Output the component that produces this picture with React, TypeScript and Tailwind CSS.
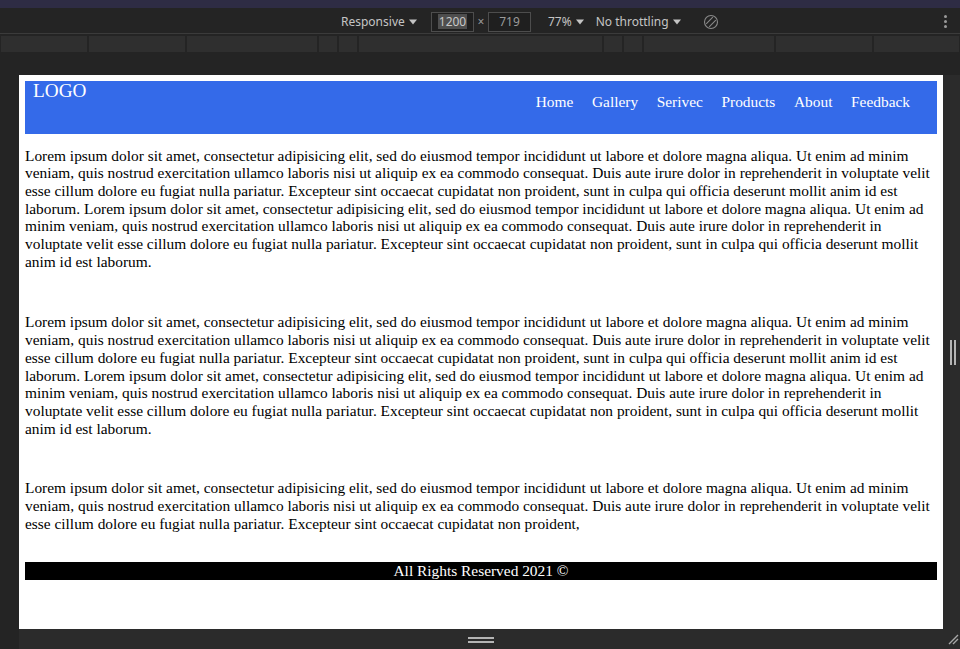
import React from "react";

const LOREM_FULL =
  "Lorem ipsum dolor sit amet, consectetur adipisicing elit, sed do eiusmod tempor incididunt ut labore et dolore magna aliqua. Ut enim ad minim veniam, quis nostrud exercitation ullamco laboris nisi ut aliquip ex ea commodo consequat. Duis aute irure dolor in reprehenderit in voluptate velit esse cillum dolore eu fugiat nulla pariatur. Excepteur sint occaecat cupidatat non proident, sunt in culpa qui officia deserunt mollit anim id est laborum. Lorem ipsum dolor sit amet, consectetur adipisicing elit, sed do eiusmod tempor incididunt ut labore et dolore magna aliqua. Ut enim ad minim veniam, quis nostrud exercitation ullamco laboris nisi ut aliquip ex ea commodo consequat. Duis aute irure dolor in reprehenderit in voluptate velit esse cillum dolore eu fugiat nulla pariatur. Excepteur sint occaecat cupidatat non proident, sunt in culpa qui officia deserunt mollit anim id est laborum.";

const LOREM_SHORT =
  "Lorem ipsum dolor sit amet, consectetur adipisicing elit, sed do eiusmod tempor incididunt ut labore et dolore magna aliqua. Ut enim ad minim veniam, quis nostrud exercitation ullamco laboris nisi ut aliquip ex ea commodo consequat. Duis aute irure dolor in reprehenderit in voluptate velit esse cillum dolore eu fugiat nulla pariatur. Excepteur sint occaecat cupidatat non proident,";

function Caret() {
  return (
    <svg width="8" height="6" viewBox="0 0 8 6" className="ml-[4px] shrink-0">
      <path d="M0 0.5 L8 0.5 L4 5.5 Z" fill="#c4c4c4" />
    </svg>
  );
}

const segments = [86, 96, 130, 18, 18, 243, 18, 18, 130, 96, 85];

export default function App() {
  return (
    <div className="w-[960px] h-[649px] bg-[#242424] flex flex-col overflow-hidden font-['Noto_Sans',sans-serif]">
      {/* window title strip */}
      <div className="h-[8px] bg-[#2e2c44]" />

      {/* device toolbar */}
      <div className="h-[25px] flex items-center pt-[2px] pl-[341px] pr-[13px] text-[12px] text-[#c4c4c4]">
        <div className="w-[74px] shrink-0 flex items-center">
          <span>Responsive</span>
          <Caret />
        </div>
        <div className="ml-[16px] w-[43px] h-[20px] border border-[#4d4d4d] bg-[#1f1f1f] flex items-center justify-center">
          <span className="bg-[#4e4e4e] text-[#c8c8c8] px-[1px] leading-[15px]">1200</span>
        </div>
        <div className="w-[14px] text-center text-[#9a9a9a]">×</div>
        <div className="w-[43px] h-[20px] border border-[#4d4d4d] bg-[#1f1f1f] flex items-center justify-center text-[#9a9a9a]">
          719
        </div>
        <div className="ml-[17px] flex items-center">
          <span>77%</span>
          <Caret />
        </div>
        <div className="ml-[12px] flex items-center">
          <span>No throttling</span>
          <Caret />
        </div>
        <svg width="16" height="16" viewBox="0 0 16 16" className="ml-[22px]">
          <circle cx="8" cy="8" r="6.5" fill="none" stroke="#8a8a8a" strokeWidth="1.1" />
          <path d="M3.2 9.8 L9.8 3.2 M6.2 12.8 L12.8 6.2" stroke="#8a8a8a" strokeWidth="1.1" fill="none" />
        </svg>
        <div className="flex-1" />
        <div className="flex flex-col gap-[2px]">
          <div className="w-[3px] h-[3px] rounded-full bg-[#9a9a9a]" />
          <div className="w-[3px] h-[3px] rounded-full bg-[#9a9a9a]" />
          <div className="w-[3px] h-[3px] rounded-full bg-[#9a9a9a]" />
        </div>
      </div>
      <div className="h-[1px] bg-[#3b3b3b]" />

      {/* media query bar */}
      <div className="mt-[2px] h-[16px] flex gap-[2px] pl-[1px]">
        {segments.map((w, i) => (
          <div key={i} className="h-full bg-[#2f2f2f] shrink-0" style={{ width: w }} />
        ))}
      </div>

      <div className="h-[23px]" />

      {/* viewport */}
      <div className="flex h-[554px]">
        <div className="w-[19px] shrink-0" />
        <div className="w-[924px] shrink-0 bg-white p-[6px] font-['Liberation_Serif',serif] overflow-hidden">
          <header className="h-[53px] bg-[#346ae9] text-white flex justify-between items-start">
            <div className="pl-[8px] mt-[2px] text-[19.25px] leading-[16px]">LOGO</div>
            <nav className="flex gap-[18.6px] pr-[27px] pt-[11.6px] text-[15.4px] leading-[17.7px]">
              <span>Home</span>
              <span>Gallery</span>
              <span>Serivec</span>
              <span>Products</span>
              <span>About</span>
              <span>Feedback</span>
            </nav>
          </header>
          <main className="text-[15.4px] leading-[17.7px] text-black">
            <p className="mt-[12.5px]">{LOREM_FULL}</p>
            <p className="mt-[43px]">{LOREM_FULL}</p>
            <p className="mt-[42px]">{LOREM_SHORT}</p>
          </main>
          <footer className="mt-[30px] bg-black text-white text-center text-[15.4px] leading-[17.7px]">
            All Rights Reserved 2021 ©
          </footer>
        </div>
        <div className="flex-1 bg-[#2b2b2b] flex items-center pl-[7px] gap-[2px]">
          <div className="w-[2px] h-[25px] bg-[#b4b4b4]" />
          <div className="w-[2px] h-[25px] bg-[#b4b4b4]" />
        </div>
      </div>

      {/* bottom resizer */}
      <div className="flex h-[20px]">
        <div className="w-[19px] shrink-0" />
        <div className="w-[924px] shrink-0 bg-[#2b2b2b] flex flex-col items-center pt-[8px] gap-[2px]">
          <div className="w-[26px] h-[2px] bg-[#b4b4b4]" />
          <div className="w-[26px] h-[2px] bg-[#b4b4b4]" />
        </div>
        <div className="flex-1 bg-[#2b2b2b] flex items-start pt-[4px] pl-[4px]">
          <svg width="12" height="12" viewBox="0 0 12 12">
            <path d="M11 2 L2 11 M11 6 L6 11" stroke="#a8a8a8" strokeWidth="1.4" fill="none" />
          </svg>
        </div>
      </div>
    </div>
  );
}
